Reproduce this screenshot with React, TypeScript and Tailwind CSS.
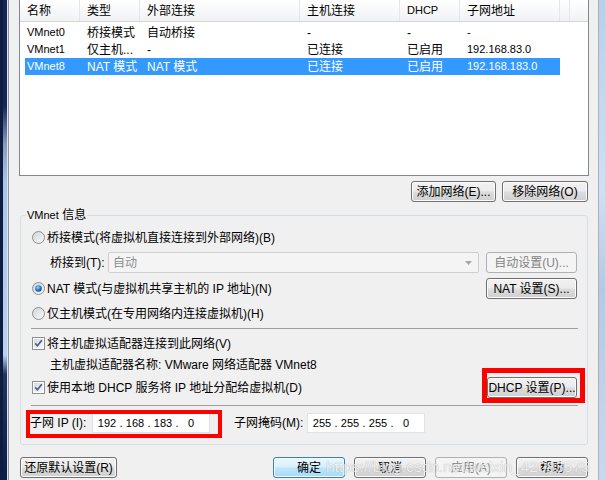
import React from 'react';
import clsx from 'clsx';

type TRow = {
    name: string,
    type: string,
    ext: string,
    host: string,
    dhcp: string,
    subnet: string,
    selected?: boolean
}

const rows: TRow[] = [
    {name: 'VMnet0', type: '桥接模式', ext: '自动桥接', host: '-', dhcp: '-', subnet: '-'},
    {name: 'VMnet1', type: '仅主机...', ext: '-', host: '已连接', dhcp: '已启用', subnet: '192.168.83.0'},
    {name: 'VMnet8', type: 'NAT 模式', ext: 'NAT 模式', host: '已连接', dhcp: '已启用', subnet: '192.168.183.0', selected: true},
];

const Radio = ({checked = false}: { checked?: boolean }) => (
    <svg width="13" height="13" viewBox="0 0 13 13" className="shrink-0">
        <defs>
            <linearGradient id="radioFill" x1="0" y1="0" x2="1" y2="1">
                <stop offset="0" stopColor="#cfd3d8"/>
                <stop offset="1" stopColor="#fbfbfb"/>
            </linearGradient>
            <radialGradient id="radioDot" cx="0.4" cy="0.35" r="0.7">
                <stop offset="0" stopColor="#9adafc"/>
                <stop offset="0.5" stopColor="#2b86d5"/>
                <stop offset="1" stopColor="#143d84"/>
            </radialGradient>
        </defs>
        <circle cx="6.5" cy="6.5" r="6" fill="url(#radioFill)" stroke="#8e8f8f"/>
        {checked && <circle cx="6.5" cy="6.5" r="3.3" fill="url(#radioDot)"/>}
    </svg>
);

const Checkbox = () => (
    <svg width="13" height="13" viewBox="0 0 13 13" className="shrink-0">
        <defs>
            <linearGradient id="cbFill" x1="0" y1="0" x2="1" y2="1">
                <stop offset="0" stopColor="#d6d9dd"/>
                <stop offset="1" stopColor="#f8f8f8"/>
            </linearGradient>
        </defs>
        <rect x="0.5" y="0.5" width="12" height="12" fill="#ffffff" stroke="#8e8f8f"/>
        <rect x="2" y="2" width="9" height="9" fill="url(#cbFill)"/>
        <path d="M3.2 6.4 L5.4 8.8 L9.8 3.2" fill="none" stroke="#4a5f97" strokeWidth="1.7"/>
    </svg>
);

type TBtnProps = {
    label: string,
    w: string,
    kind?: 'normal' | 'default' | 'disabled'
}

const WinButton = ({label, w, kind = 'normal'}: TBtnProps) => (
    <button
        type="button"
        className={clsx(
            "h-[21px] shrink-0 rounded-[3px] border flex items-center justify-center text-[12px] leading-none",
            w,
            kind === 'normal' && "border-[#707070] text-black bg-[linear-gradient(#f2f2f2_0%,#ebebeb_48%,#dddddd_52%,#cfcfcf_100%)] shadow-[inset_0_0_0_1px_#fcfcfc]",
            kind === 'default' && "border-[#3c7fb1] text-black bg-[linear-gradient(#eaf6fd_0%,#d9f0fc_48%,#bee6fd_52%,#a7d9f5_100%)] shadow-[inset_0_0_0_1px_#f4fbfe]",
            kind === 'disabled' && "border-[#adb2b5] text-[#838383] bg-[#f4f4f4]"
        )}
    >
        {label}
    </button>
);

const IpBox = ({parts}: { parts: string[] }) => (
    <div className="w-[118px] h-[20px] border border-[#dfe3e8] bg-white flex items-center pl-[2px] text-[11px] leading-none">
        {parts.map((p, i) => (
            <React.Fragment key={i}>
                {i > 0 && <span className="w-[4px] text-center">.</span>}
                <span className="w-[24px] text-center">{p}</span>
            </React.Fragment>
        ))}
    </div>
);

const App = () => {
    return (
        <div className="relative w-[605px] h-[480px] overflow-hidden flex bg-[#f0f0f0] text-[12px] text-black font-['Liberation_Sans','Noto_Sans_CJK_SC',sans-serif]">
            {/* left window frame */}
            <div className="flex shrink-0">
                <div className="w-[3px] bg-[#0e1c42]"/>
                <div className="w-[4px] bg-[linear-gradient(#13265a_0%,#13265a_22%,#8a9bb8_30%,#a8c6e6_38%,#b5d2ef_74%,#22335f_78%,#0f1d44_100%)]"/>
                <div className="w-[1px] bg-[#dde3ea]"/>
                <div className="w-[1px] bg-[#8c96a3]"/>
            </div>

            <div className="w-[589px] shrink-0 flex flex-col">
                {/* network list */}
                <div className="ml-[10px] w-[570px] h-[176px] border-x border-b border-[#828790] bg-white">
                    <div className="flex h-[22px] border-b border-[#d5d5d5] bg-[linear-gradient(#ffffff,#f1f2f4)]">
                        <div className="w-[60px] pl-[7px] flex items-center border-r border-[#e3e5e8]">名称</div>
                        <div className="w-[60px] pl-[7px] flex items-center border-r border-[#e3e5e8]">类型</div>
                        <div className="w-[160px] pl-[7px] flex items-center border-r border-[#e3e5e8]">外部连接</div>
                        <div className="w-[100px] pl-[7px] flex items-center border-r border-[#e3e5e8]">主机连接</div>
                        <div className="w-[60px] pl-[7px] flex items-center border-r border-[#e3e5e8] text-[11px]">DHCP</div>
                        <div className="w-[100px] pl-[7px] flex items-center border-r border-[#e3e5e8]">子网地址</div>
                        <div className="w-[10px] border-r border-[#e3e5e8]"/>
                    </div>
                    <div className="pt-[2px]">
                        {rows.map((r) => (
                            <div
                                key={r.name}
                                className={clsx(
                                    "ml-[5px] w-[535px] h-[17px] flex items-center leading-none",
                                    r.selected && "bg-[#3399ff] text-white"
                                )}
                            >
                                <div className="w-[55px] pl-[2px] text-[11px]">{r.name}</div>
                                <div className="w-[60px] pl-[7px]">{r.type}</div>
                                <div className="w-[160px] pl-[7px]">{r.ext}</div>
                                <div className="w-[100px] pl-[7px]">{r.host}</div>
                                <div className="w-[60px] pl-[7px]">{r.dhcp}</div>
                                <div className="w-[100px] pl-[7px] text-[11px]">{r.subnet}</div>
                            </div>
                        ))}
                    </div>
                </div>

                <div className="ml-[10px] w-[570px] mt-[5px] flex justify-end gap-[6px] pr-[1px]">
                    <WinButton label="添加网络(E)..." w="w-[85px]"/>
                    <WinButton label="移除网络(O)" w="w-[86px]"/>
                </div>

                {/* VMnet info group */}
                <fieldset className="ml-[11px] w-[568px] mt-[7px] border border-[#d5dfe5] rounded-[3px] pb-[11px]">
                    <legend className="ml-[5px] px-[1px] leading-[13px]">
                        <span className="text-[11px]">VMnet</span> 信息
                    </legend>

                    <div className="mt-[6px] h-[19px] pl-[11px] flex items-center gap-[2px] leading-none">
                        <Radio/>
                        <span>桥接模式(将虚拟机直接连接到外部网络)(B)</span>
                    </div>

                    <div className="mt-[5px] h-[21px] pl-[29px] flex items-center leading-none">
                        <span className="w-[58px]">桥接到(T):</span>
                        <div className="w-[371px] h-[21px] border border-[#cfcfcf] rounded-[2px] bg-[#f4f4f4] flex items-center justify-between pl-[4px] pr-[6px] text-[#8d8d8d]">
                            <span>自动</span>
                            <svg width="7" height="4" viewBox="0 0 7 4">
                                <path d="M0 0 L7 0 L3.5 4 Z" fill="#a6a6a6"/>
                            </svg>
                        </div>
                        <div className="ml-[7px]">
                            <WinButton label="自动设置(U)..." w="w-[91px]" kind="disabled"/>
                        </div>
                    </div>

                    <div className="mt-[5px] h-[21px] pl-[11px] pr-[10px] flex items-center justify-between leading-none">
                        <div className="flex items-center gap-[2px]">
                            <Radio checked/>
                            <span>NAT 模式(与虚拟机共享主机的 IP 地址)(N)</span>
                        </div>
                        <WinButton label="NAT 设置(S)..." w="w-[91px]"/>
                    </div>

                    <div className="mt-[5px] h-[19px] pl-[11px] flex items-center gap-[2px] leading-none">
                        <Radio/>
                        <span>仅主机模式(在专用网络内连接虚拟机)(H)</span>
                    </div>

                    <div className="mt-[5px] ml-[10px] mr-[9px] border-t border-[#a0a0a0]"/>

                    <div className="mt-[5px] h-[19px] pl-[11px] flex items-center gap-[2px] leading-none">
                        <Checkbox/>
                        <span>将主机虚拟适配器连接到此网络(V)</span>
                    </div>

                    <div className="mt-[2px] h-[19px] pl-[29px] flex items-center leading-none">
                        主机虚拟适配器名称: VMware 网络适配器 VMnet8
                    </div>

                    <div className="mt-[3px] h-[21px] pl-[11px] pr-[10px] flex items-center justify-between leading-none">
                        <div className="flex items-center gap-[2px]">
                            <Checkbox/>
                            <span>使用本地 DHCP 服务将 IP 地址分配给虚拟机(D)</span>
                        </div>
                        <WinButton label="DHCP 设置(P)..." w="w-[90px]"/>
                    </div>

                    <div className="mt-[7px] ml-[10px] mr-[9px] border-t border-[#a0a0a0]"/>

                    <div className="mt-[7px] h-[20px] pl-[9px] flex items-center leading-none">
                        <span className="w-[62px]">子网 IP (I):</span>
                        <IpBox parts={['192', '168', '183', '0']}/>
                        <span className="ml-[24px] w-[73px]">子网掩码(M):</span>
                        <IpBox parts={['255', '255', '255', '0']}/>
                    </div>
                </fieldset>

                <div className="ml-[11px] w-[568px] mt-[12px] flex items-center">
                    <WinButton label="还原默认设置(R)" w="w-[97px]"/>
                    <div className="ml-auto flex gap-[9px]">
                        <WinButton label="确定" w="w-[72px]" kind="default"/>
                        <WinButton label="取消" w="w-[72px]"/>
                        <WinButton label="应用(A)" w="w-[72px]" kind="disabled"/>
                        <WinButton label="帮助" w="w-[72px]"/>
                    </div>
                </div>
            </div>

            {/* right window frame */}
            <div className="flex shrink-0">
                <div className="w-[1px] bg-[#a7b1bd]"/>
                <div className="w-[6px] bg-[linear-gradient(#b9cfe9,#cfe0f3_40%,#b7c9e2_60%,#c8d9ef)]"/>
            </div>

            {/* annotation boxes */}
            <div className="absolute left-[482px] top-[368px] w-[103px] h-[35px] border-[5px] border-[#ff0000]"/>
            <div className="absolute left-[26px] top-[410px] w-[196px] h-[28px] border-[4px] border-[#ff0000]"/>

            {/* watermark */}
            <div className="absolute left-[326px] top-[459px] text-[15.5px] leading-none text-[#f4f4f4] opacity-80 [text-shadow:0_0_1px_#8a8a8a] pointer-events-none">
                https://blog.csdn.net/weixin_42083575
            </div>
        </div>
    );
};

export default App;
